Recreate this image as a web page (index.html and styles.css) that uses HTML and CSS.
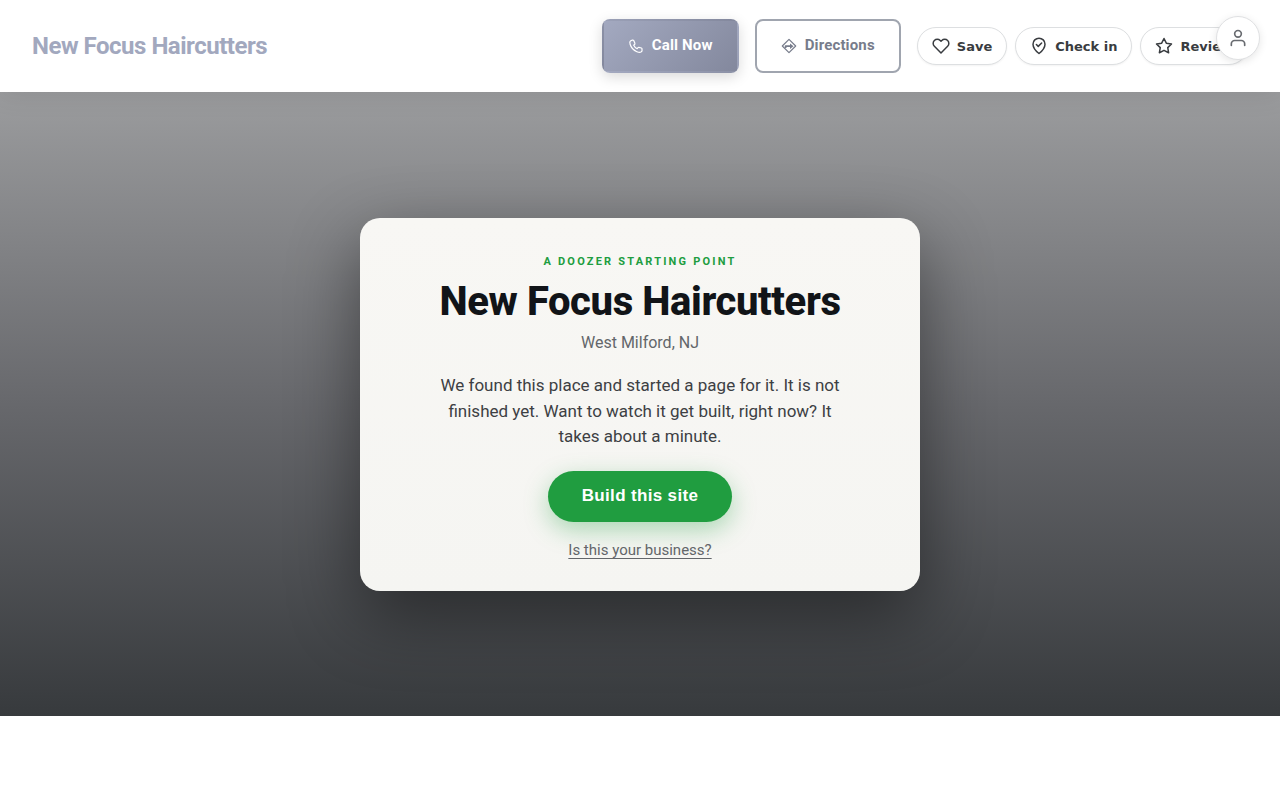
FILE: index.html
```html
<!DOCTYPE html>
<html lang="en">
<head>
  <meta charset="UTF-8">
  <meta name="viewport" content="width=device-width, initial-scale=1.0">
  <title>New Focus Haircutters</title>
  <link rel="stylesheet" href="styles.css">
</head>
<body>

  <header class="site-header">
    <a class="brand" href="#">New Focus Haircutters</a>

    <nav class="actions">
      <a class="btn btn-primary" href="#call">
        <svg class="btn-icon" viewBox="0 0 16 16" fill="none" stroke="currentColor" stroke-width="1.2" stroke-linejoin="round"><path d="M4 2.2 2.4 3c-.7.5-.8 1.6-.3 3.2.9 3 3.8 6.2 6.8 7.5 1.7.7 3.2.9 4 .4l.7-.5c.3-.2.4-.5.4-.9v-2c0-.4-.2-.6-.6-.7l-2.5-.6c-.4-.1-.7 0-.9.3l-.8 1C7.6 10 6.5 8.8 5.7 7.2l1-.9c.3-.3.4-.6.2-1L5.7 2.5C5.5 2.1 5.2 2 4.8 2Z"/></svg>
        <span>Call Now</span>
      </a>
      <a class="btn btn-outline" href="#directions">
        <svg class="btn-icon" viewBox="0 0 16 16" fill="none" stroke="currentColor" stroke-width="1.2" stroke-linejoin="round"><path d="M8 1.3 14.7 8 8 14.7 1.3 8Z"/><path d="M4.6 10V8.2H10" stroke-width="1.8"/><path d="M9 5.5 12.5 8.2 9 10.9Z" fill="currentColor" stroke="none"/></svg>
        <span>Directions</span>
      </a>

      <div class="pills">
        <button class="pill" type="button">
          <svg class="pill-icon" viewBox="0 0 24 24"><path d="M20.84 4.61a5.5 5.5 0 0 0-7.78 0L12 5.67l-1.06-1.06a5.5 5.5 0 0 0-7.78 7.78L12 21.23l8.84-8.84a5.5 5.5 0 0 0 0-7.78z"/></svg>
          Save
        </button>
        <button class="pill" type="button">
          <svg class="pill-icon" viewBox="0 0 24 24"><path d="M12 22s8-6.5 8-12.5a8 8 0 0 0-16 0C4 15.5 12 22 12 22z"/><path d="m8.5 10 2.5 2.5 4.5-4.5"/></svg>
          Check in
        </button>
        <button class="pill" type="button">
          <svg class="pill-icon" viewBox="0 0 24 24"><path d="m12 2 3.09 6.26L22 9.27l-5 4.87 1.18 6.88L12 17.77l-6.18 3.25L7 14.14 2 9.27l6.91-1.01z"/></svg>
          Review
        </button>
      </div>
    </nav>
  </header>

  <button class="account" type="button" aria-label="Account">
    <svg viewBox="0 0 24 24"><path d="M20 21v-2a4 4 0 0 0-4-4H8a4 4 0 0 0-4 4v2"/><circle cx="12" cy="7" r="4"/></svg>
  </button>

  <main class="hero">
    <section class="card">
      <p class="eyebrow">A Doozer starting point</p>
      <h1>New Focus Haircutters</h1>
      <p class="place">West Milford, NJ</p>
      <p class="lead">We found this place and started a page for it. It is not finished yet. Want to watch it get built, right now? It takes about a minute.</p>
      <button class="build" type="button">Build this site</button>
      <a class="claim" href="#claim">Is this your business?</a>
    </section>
  </main>

</body>
</html>
```

FILE: styles.css
```css
* {
  box-sizing: border-box;
}

body {
  margin: 0;
  font-family: Roboto, sans-serif;
  background: #fff;
  color: #3d4043;
}

.site-header {
  position: relative;
  z-index: 1;
  display: flex;
  align-items: center;
  justify-content: space-between;
  min-height: 92px;
  padding: 0 32px;
  background: #fff;
  box-shadow: 0 4px 24px rgba(0, 0, 0, 0.08);
}

.brand {
  color: #a2a8be;
  font-size: 24px;
  font-weight: 700;
  letter-spacing: -0.02em;
  text-decoration: none;
  white-space: nowrap;
}

.actions {
  display: flex;
  align-items: center;
  gap: 16px;
}

.btn {
  display: flex;
  align-items: center;
  gap: 8px;
  height: 54px;
  padding: 0 24px 2px;
  border: 2px solid transparent;
  border-radius: 8px;
  font-size: 15px;
  font-weight: 700;
  letter-spacing: 0.01em;
  text-decoration: none;
  white-space: nowrap;
}

.btn-primary {
  color: #fff;
  background: linear-gradient(135deg, #a3a9c0, #83889d);
  box-shadow: 0 4px 14px rgba(0, 0, 0, 0.15);
}

.btn-outline {
  color: #777c8b;
  border-color: #a0a5af;
}

.btn-icon {
  width: 16px;
  height: 16px;
  margin-top: 2px;
}

.pills {
  display: flex;
  gap: 8px;
}

.pill {
  display: flex;
  align-items: center;
  gap: 7px;
  height: 38px;
  padding: 0 14px;
  border: 1px solid #dddfe1;
  border-radius: 19px;
  background: #fff;
  color: #393c40;
  font-family: "DejaVu Sans", sans-serif;
  font-size: 13px;
  font-weight: 700;
  white-space: nowrap;
  box-shadow: 0 1px 2px rgba(0, 0, 0, 0.05);
}

.pill-icon,
.account svg {
  width: 18px;
  height: 18px;
  fill: none;
  stroke: currentColor;
  stroke-width: 2;
  stroke-linecap: round;
  stroke-linejoin: round;
}

/* floats over the header */
.account {
  position: fixed;
  z-index: 2;
  top: 16px;
  right: 20px;
  display: flex;
  align-items: center;
  justify-content: center;
  width: 44px;
  height: 44px;
  padding: 0;
  border: 1px solid #dfe0e2;
  border-radius: 50%;
  background: #fff;
  color: #686b70;
  box-shadow: 0 2px 8px rgba(0, 0, 0, 0.1);
}

.account svg {
  width: 20px;
  height: 20px;
}

.hero {
  display: flex;
  align-items: center;
  justify-content: center;
  min-height: 78vh;
  padding: 25px 24px 24px;
  background: linear-gradient(#9b9c9e, #67686c 50%, #373a3d);
}

.card {
  display: flex;
  flex-direction: column;
  align-items: center;
  width: 100%;
  max-width: 560px;
  padding: 36px 40px 32px;
  border-radius: 20px;
  background: linear-gradient(#f8f7f4, #f5f5f2);
  box-shadow: 0 24px 70px rgba(0, 0, 0, 0.45);
  text-align: center;
}

.eyebrow {
  margin: 0 0 8px;
  color: #209d40;
  font-size: 11px;
  font-weight: 700;
  letter-spacing: 0.2em;
  line-height: 16px;
  text-transform: uppercase;
}

h1 {
  margin: 0 0 7px;
  color: #111418;
  font-size: 40px;
  font-weight: 800;
  letter-spacing: -0.01em;
  line-height: 48px;
}

.place {
  margin: 0 0 20px;
  color: #63666a;
  font-size: 16px;
  line-height: 20px;
}

.lead {
  max-width: 420px;
  margin: 0 0 21px;
  font-size: 17px;
  line-height: 1.5;
}

.build {
  height: 51px;
  margin-bottom: 19px;
  padding: 0 34px;
  border: none;
  border-radius: 26px;
  background: #209d40;
  color: #fff;
  font-family: "Liberation Sans", Arial, sans-serif;
  font-size: 17px;
  font-weight: 700;
  letter-spacing: 0.02em;
  box-shadow: 0 8px 24px rgba(32, 157, 64, 0.35);
}

.claim {
  color: #63666a;
  font-size: 15px;
  line-height: 18px;
  text-underline-offset: 3px;
}
```
